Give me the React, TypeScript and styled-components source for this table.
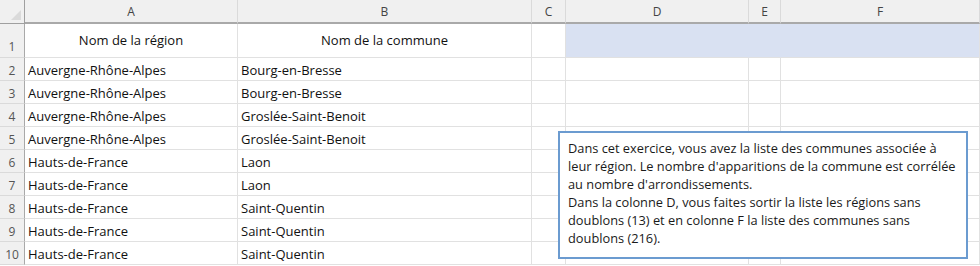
import styled, { createGlobalStyle } from 'styled-components';

const columns = [
  { name: 'A', width: 213 },
  { name: 'B', width: 294 },
  { name: 'C', width: 34 },
  { name: 'D', width: 183 },
  { name: 'E', width: 32 },
  { name: 'F', width: 199 },
];

const rows: string[][] = [
  ['Auvergne-Rhône-Alpes', 'Bourg-en-Bresse'],
  ['Auvergne-Rhône-Alpes', 'Bourg-en-Bresse'],
  ['Auvergne-Rhône-Alpes', 'Groslée-Saint-Benoit'],
  ['Auvergne-Rhône-Alpes', 'Groslée-Saint-Benoit'],
  ['Hauts-de-France', 'Laon'],
  ['Hauts-de-France', 'Laon'],
  ['Hauts-de-France', 'Saint-Quentin'],
  ['Hauts-de-France', 'Saint-Quentin'],
  ['Hauts-de-France', 'Saint-Quentin'],
];

// lines of the text box, wrapped as in the workbook
const noteLines = [
  'Dans cet exercice, vous avez la liste des communes associée à',
  "leur région. Le nombre d'apparitions de la commune est corrélée",
  "au nombre d'arrondissements.",
  'Dans la colonne D, vous faites sortir la liste les régions sans',
  'doublons (13) et en colonne F la liste des communes sans',
  'doublons (216).',
];

const GlobalStyle = createGlobalStyle`
  body {
    margin: 0;
    background: #ffffff;
    font-family: 'Open Sans', 'Liberation Sans', sans-serif;
  }
`;

export default function App() {
  return (
    <>
      <GlobalStyle />
      <Sheet>
        <Grid>
          <Corner>
            <CornerMark />
          </Corner>
          {columns.map((c) => (
            <ColHeader key={c.name}>{c.name}</ColHeader>
          ))}

          <RowHeader $tall>1</RowHeader>
          <Cell $tall $center>Nom de la région</Cell>
          <Cell $tall $center>Nom de la commune</Cell>
          <Cell $tall />
          <Cell $tall $fill $noRight />
          <Cell $tall $fill $noRight />
          <Cell $tall $fill />

          {rows.map((r, i) => (
            <Row key={i} index={i + 2} values={r} />
          ))}
        </Grid>

        <Note>
          {noteLines.map((line, i) => (
            <NoteLine key={i}>{line}</NoteLine>
          ))}
        </Note>
      </Sheet>
    </>
  );
}

const Row = ({ index, values }: { index: number; values: string[] }) => (
  <>
    <RowHeader>{index}</RowHeader>
    {columns.map((c, j) => (
      <Cell key={c.name}>{values[j] ?? ''}</Cell>
    ))}
  </>
);

const Sheet = styled.div`
  position: relative;
  width: 980px;
  height: 266px;
  overflow: hidden;
`;

const Grid = styled.div`
  display: grid;
  grid-template-columns: 25px ${columns.map((c) => `${c.width}px`).join(' ')};
  grid-template-rows: 24px 34px repeat(9, 23px);
`;

const Corner = styled.div`
  position: relative;
  background: #f0f0f0;
  border-right: 1px solid #9f9f9f;
  border-bottom: 1px solid #9f9f9f;
`;

const CornerMark = styled.div`
  position: absolute;
  right: 3px;
  bottom: 3px;
  width: 0;
  height: 0;
  border-left: 10px solid transparent;
  border-bottom: 10px solid #dadada;
`;

const ColHeader = styled.div`
  background: #f0f0f0;
  border-right: 1px solid #dadada;
  border-bottom: 2px solid #a9a9a9;
  color: #444;
  font-size: 12px;
  display: flex;
  align-items: center;
  justify-content: center;
  padding-top: 1px;
`;

const RowHeader = styled.div<{ $tall?: boolean }>`
  background: #f0f0f0;
  border-right: 1px solid #a9a9a9;
  border-bottom: 1px solid #dadada;
  color: #555;
  font-size: 12px;
  display: flex;
  align-items: flex-end;
  justify-content: center;
  padding-bottom: ${(p) => (p.$tall ? '2px' : '1px')};
`;

const Cell = styled.div<{ $tall?: boolean; $center?: boolean; $fill?: boolean; $noRight?: boolean }>`
  border-right: 1px solid ${(p) => (p.$fill && p.$noRight ? '#d9e1f2' : '#e1e1e1')};
  border-bottom: 1px solid #e1e1e1;
  background: ${(p) => (p.$fill ? '#d9e1f2' : '#ffffff')};
  color: #111;
  font-size: 13px;
  white-space: nowrap;
  overflow: hidden;
  display: flex;
  align-items: ${(p) => (p.$tall ? 'center' : 'flex-end')};
  justify-content: ${(p) => (p.$center ? 'center' : 'flex-start')};
  padding: 0 3px 1px;
`;

const Note = styled.div`
  position: absolute;
  left: 558px;
  top: 131px;
  width: 390px;
  height: 112px;
  background: #ffffff;
  border: 2px solid #6b9bd0;
  padding: 6px 8px;
  color: #1a1a1a;
  font-size: 12.8px;
  line-height: 18px;
`;

const NoteLine = styled.div`
  white-space: nowrap;
`;
